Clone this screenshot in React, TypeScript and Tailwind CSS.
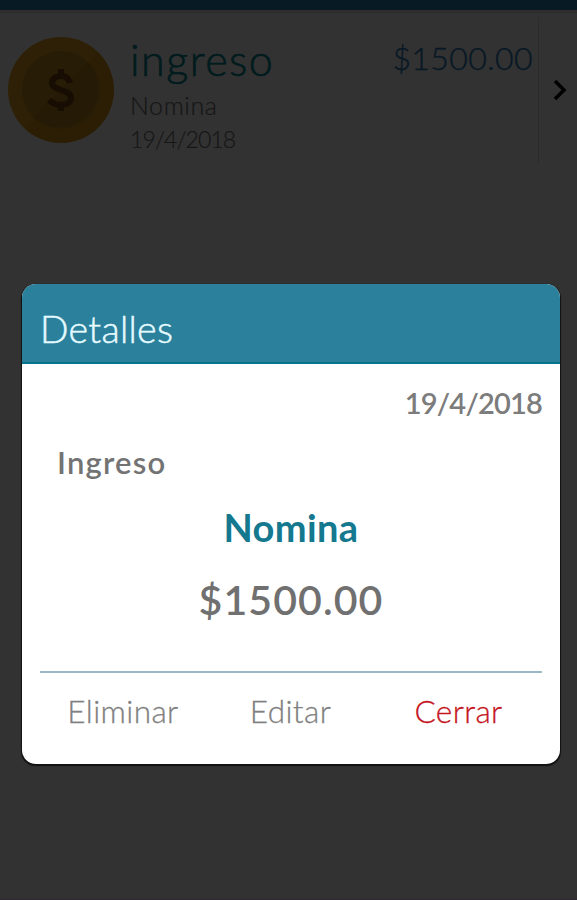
import type { ReactNode } from 'react';

interface Movement {
  kind: string;
  concept: string;
  date: string;
  amount: string;
}

const movement: Movement = {
  kind: 'ingreso',
  concept: 'Nomina',
  date: '19/4/2018',
  amount: '$1500.00',
};

function Coin() {
  return (
    <svg viewBox="0 0 106 106" className="mt-[24px] ml-2 h-[106px] w-[106px] shrink-0">
      <circle cx="53" cy="53" r="53" fill="#e6a020" />
      <path d="M90.500 15.500a53 53 0 0 1-75 75Z" fill="#d08c14" opacity=".4" />
      <circle cx="53" cy="53" r="39" fill="#c08a1c" />
      <path d="M80.500 25.500a39 39 0 0 1-55 55Z" fill="#a06c14" opacity=".35" />
      <path
        d="M53 32v7M53 67v7M62 46c-1-4-4-7-9-7s-9 3-9 7c0 8 19 6 19 15 0 5-5 7-11 7-5 0-8-2-11-5"
        fill="none"
        stroke="#74400c"
        strokeWidth="6"
      />
    </svg>
  );
}

function MovementRow({ item }: { item: Movement }) {
  return (
    <div className="flex h-[158px] border-b border-[#f2f2f2]">
      <Coin />
      <div className="ml-[16px] flex flex-1 flex-col font-light">
        <p className="mt-[20px] h-[54px] text-[43px] leading-[54px] tracking-[1.5px] text-[#008890] [-webkit-text-stroke:0.6px_#008890]">
          {item.kind}
        </p>
        <p className="mt-[1px] h-[34px] text-[25px] leading-[34px] tracking-[0.6px] text-[#707070] [-webkit-text-stroke:0.2px_#707070]">
          {item.concept}
        </p>
        <p className="mt-[1px] h-[32px] text-[23px] leading-[32px] tracking-[-0.9px] text-[#707070] [-webkit-text-stroke:0.2px_#707070]">
          {item.date}
        </p>
      </div>
      <p className="mt-[23px] mr-[5px] text-[32px] leading-[44px] font-light tracking-[0.4px] text-[#2a7ab8] [-webkit-text-stroke:0.4px_#2a7ab8]">
        {item.amount}
      </p>
      <div className="mt-1 flex h-[146px] w-[39px] items-center border-l border-[#d6d6d6] pl-[13px]">
        <svg viewBox="0 0 16 22" className="h-[22px] w-4" fill="none" stroke="#000" strokeWidth="3.600">
          <path d="M3 2l9 9-9 9" />
        </svg>
      </div>
    </div>
  );
}

function Modal({ title, children }: { title: string; children: ReactNode }) {
  return (
    <div className="absolute inset-0 border-b border-[#2e2630] bg-black/80 pt-[284px] pl-[22px]">
      <div className="h-[480px] w-[538px] overflow-hidden rounded-[14px] bg-white shadow-[0_1px_1px_0.5px_#111]">
        <h2 className="h-[80px] border-b-2 border-[#08738c] bg-[#2b809c] pt-[18px] pl-[18px] text-[37.500px] leading-[54px] font-light tracking-[0.3px] text-[#e4faff] [-webkit-text-stroke:0.5px_#e4faff]">
          {title}
        </h2>
        {children}
      </div>
    </div>
  );
}

export default function App() {
  return (
    <div className="relative h-[900px] w-[577px] overflow-hidden bg-[#fafafa] font-['Lato',sans-serif]">
      <div className="h-[10px] bg-[#2880b0]" />
      <div className="h-[3px] bg-[#e0e0e0]" />
      <MovementRow item={movement} />

      <Modal title="Detalles">
        <p className="mt-[18px] mr-[18px] text-right text-[29px] leading-[42px] font-semibold tracking-[-0.8px] text-[#7c7c7c]">
          {movement.date}
        </p>
        <p className="mt-[17px] ml-[35px] text-[31px] leading-[42px] font-semibold tracking-[1.2px] text-[#737373]">
          Ingreso
        </p>
        <p className="mt-[19px] text-center text-[38px] leading-[50px] font-bold tracking-[0.4px] text-[#14788f]">
          {movement.concept}
        </p>
        <p className="mt-[20px] text-center text-[41px] leading-[56px] font-semibold tracking-[1.1px] text-[#707070]">
          {movement.amount}
        </p>
        <div className="mx-[18px] mt-[43px] flex border-t-2 border-[#9ab9c4] pt-[17px] text-[31.500px] leading-[42px] font-light tracking-[0.4px] text-[#808080] [-webkit-text-stroke:0.3px_currentColor]">
          <button className="w-[166px]">Eliminar</button>
          <button className="w-[169px]">Editar</button>
          <button className="flex-1 text-[#c4141c] [-webkit-text-stroke:0.3px_#c4141c]">Cerrar</button>
        </div>
      </Modal>
    </div>
  );
}
